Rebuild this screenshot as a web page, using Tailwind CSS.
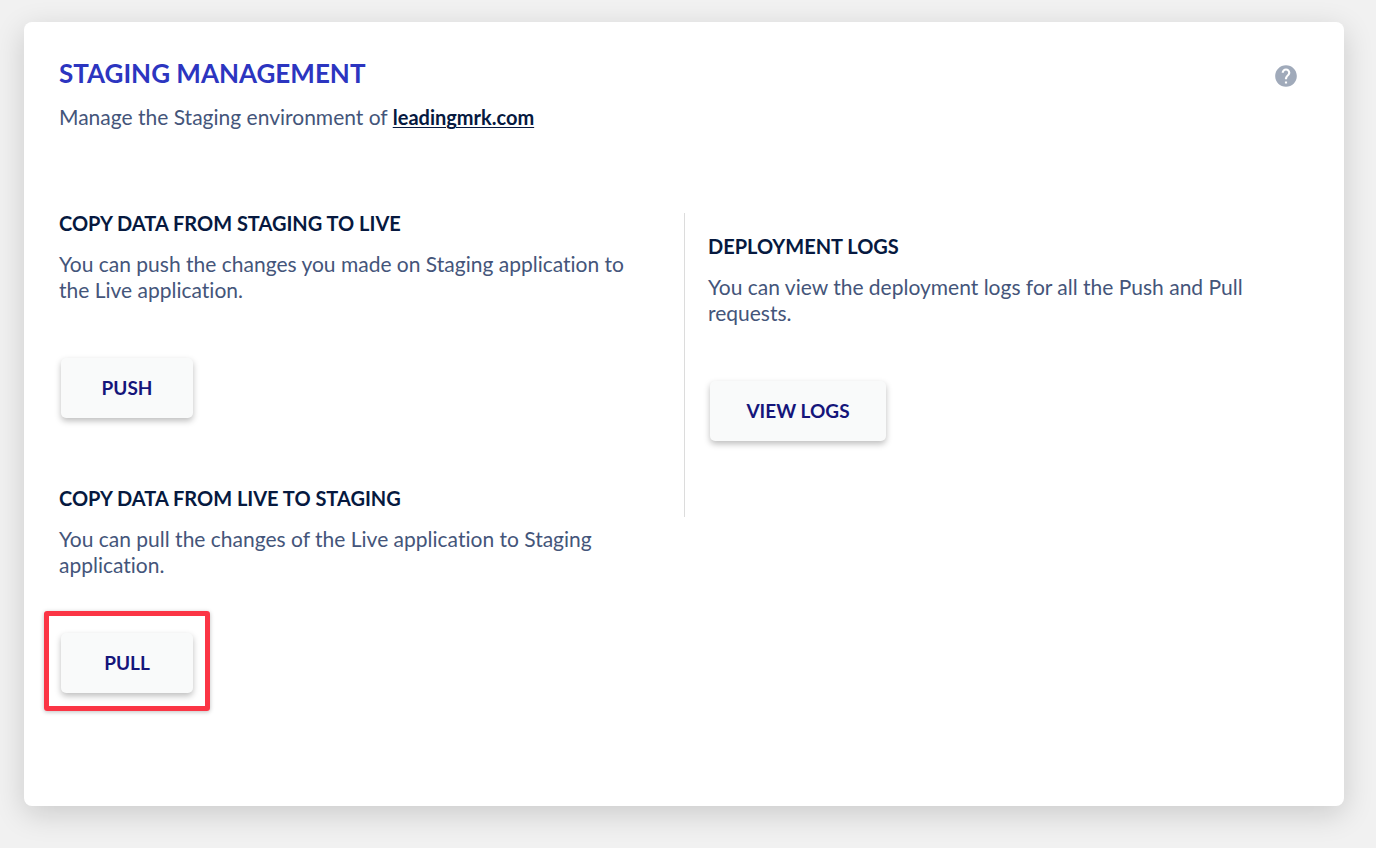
<!DOCTYPE html>
<html lang="en">
<head>
    <meta charset="UTF-8">
    <meta name="viewport" content="width=device-width, initial-scale=1.0">
    <title>Staging Management</title>
    <script src="https://cdn.jsdelivr.net/npm/@tailwindcss/browser@4"></script>
</head>
<body class="min-h-screen bg-[#f1f1f1] pt-[22px] pb-[42px] pl-6 pr-8 font-[Lato,'Open_Sans',sans-serif] text-[21px] leading-[26px] text-[#44557a] [font-variant-ligatures:none]">
    <main class="bg-white rounded-lg shadow-[0_8px_30px_rgba(0,0,0,0.16)] px-[35px] pt-[35px] pb-[113px]">
        <header class="flex items-start justify-between">
            <div>
                <h1 class="text-[26px] leading-8 font-bold text-[#2c35c0]">STAGING MANAGEMENT</h1>
                <p class="mt-[15px]">Manage the Staging environment of <a href="#" class="text-[20px] font-bold text-[#06193f] underline underline-offset-2 decoration-1">leadingmrk.com</a></p>
            </div>
            <button type="button" aria-label="Help" class="mt-[6px] mr-[10px] cursor-pointer">
                <svg class="size-[26px] fill-[#a0aaba]" viewBox="0 0 24 24" aria-hidden="true">
                    <path d="M12 2C6.48 2 2 6.48 2 12s4.48 10 10 10 10-4.48 10-10S17.52 2 12 2zm1 17h-2v-2h2v2zm2.07-7.75l-.9.92C13.45 12.9 13 13.5 13 15h-2v-.5c0-1.1.45-2.1 1.17-2.83l1.24-1.26c.37-.36.59-.86.59-1.41 0-1.1-.9-2-2-2s-2 .9-2 2H8c0-2.21 1.79-4 4-4s4 1.790 4 4c0 .88-.36 1.680-.93 2.250z"/>
                </svg>
            </button>
        </header>

        <div class="mt-[83px] grid grid-cols-2 items-start">
            <div class="pr-8">
                <!-- Push -->
                <section>
                    <h2 class="text-[20px] leading-5 font-bold text-[#06193f]">COPY DATA FROM STAGING TO LIVE</h2>
                    <p class="mt-[18px]">You can push the changes you made on Staging application to the Live application.</p>
                    <button type="button" class="block mt-[55px] ml-0.5 h-[60px] w-[132px] rounded-[5px] bg-[#f9fafa] text-[19px] font-bold text-[#15157a] shadow-[0_3px_6px_rgba(0,0,0,0.26)] cursor-pointer">PUSH</button>
                </section>

                <!-- Pull -->
                <section class="mt-[70px]">
                    <h2 class="text-[20px] leading-5 font-bold text-[#06193f]">COPY DATA FROM LIVE TO STAGING</h2>
                    <p class="mt-[18px]">You can pull the changes of the Live application to Staging application.</p>
                    <div class="relative mt-[55px] ml-0.5 w-[132px]">
                        <div class="absolute -inset-x-[17px] -top-[22px] -bottom-[18px] rounded-[3px] border-[5px] border-[#fb3545] shadow-[0_1px_4px_rgba(0,0,0,0.25)] pointer-events-none"></div>
                        <button type="button" class="block h-[60px] w-full rounded-[5px] bg-[#f9fafa] text-[19px] font-bold text-[#15157a] shadow-[0_3px_6px_rgba(0,0,0,0.26)] cursor-pointer">PULL</button>
                    </div>
                </section>
            </div>

            <!-- Logs -->
            <section class="min-h-[304px] border-l border-[#dcdcdc] pl-[23px] pt-[23px]">
                <h2 class="text-[20px] leading-5 font-bold text-[#06193f]">DEPLOYMENT LOGS</h2>
                <p class="mt-[18px]">You can view the deployment logs for all the Push and Pull requests.</p>
                <button type="button" class="block mt-[55px] ml-0.5 h-[60px] w-[176px] rounded-[5px] bg-[#f9fafa] text-[19px] font-bold text-[#15157a] shadow-[0_3px_6px_rgba(0,0,0,0.26)] cursor-pointer">VIEW LOGS</button>
            </section>
        </div>
    </main>
</body>
</html>
